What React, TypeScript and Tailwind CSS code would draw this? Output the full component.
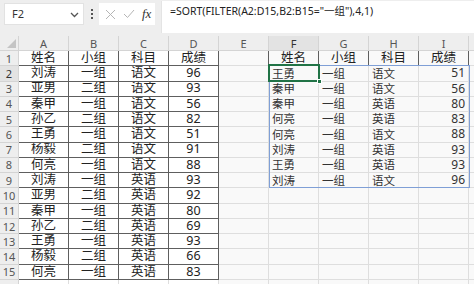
import React from "react";

const COLS = ["A", "B", "C", "D", "E", "F", "G", "H", "I"];

const left = [
  ["姓名", "小组", "科目", "成绩"],
  ["刘涛", "一组", "语文", "96"],
  ["亚男", "二组", "语文", "93"],
  ["秦甲", "一组", "语文", "56"],
  ["孙乙", "二组", "语文", "82"],
  ["王勇", "一组", "语文", "51"],
  ["杨毅", "二组", "语文", "91"],
  ["何亮", "一组", "语文", "88"],
  ["刘涛", "一组", "英语", "93"],
  ["亚男", "二组", "英语", "92"],
  ["秦甲", "一组", "英语", "80"],
  ["孙乙", "二组", "英语", "69"],
  ["王勇", "一组", "英语", "93"],
  ["杨毅", "二组", "英语", "66"],
  ["何亮", "一组", "英语", "83"],
];

const spill = [
  ["王勇", "一组", "语文", "51"],
  ["秦甲", "一组", "语文", "56"],
  ["秦甲", "一组", "英语", "80"],
  ["何亮", "一组", "英语", "83"],
  ["何亮", "一组", "语文", "88"],
  ["刘涛", "一组", "英语", "93"],
  ["王勇", "一组", "英语", "93"],
  ["刘涛", "一组", "语文", "96"],
];

// dark-bordered cells: A1:D15 and F1:I1 (row 1-based, col 0-based)
function isDark(r: number, c: number) {
  if (r >= 1 && r <= 15 && c >= 0 && c <= 3) return true;
  if (r === 1 && c >= 5 && c <= 8) return true;
  return false;
}

function cellText(r: number, c: number) {
  if (r >= 1 && r <= 15 && c <= 3) return left[r - 1][c];
  if (r === 1 && c >= 5 && c <= 8) return left[0][c - 5];
  if (r >= 2 && r <= 9 && c >= 5 && c <= 8) return spill[r - 2][c - 5];
  return "";
}

function Cell({ r, c }: { r: number; c: number }) {
  const dark = isDark(r, c);
  const rightDark = dark || isDark(r, c + 1);
  const bottomDark = dark || isDark(r + 1, c);
  const text = cellText(r, c);
  const inSpill = r >= 2 && r <= 9 && c >= 5;
  const num = c === 8 || c === 3;

  let align = "justify-center text-[12.5px] text-[#222]";
  if (inSpill) align = num ? "justify-end pr-[3px] text-[12px] text-[#333]" : "justify-start pl-[3px] text-[11.5px] text-[#333]";

  return (
    <div
      className={`flex items-center overflow-hidden whitespace-nowrap leading-none border-r border-b ${
        rightDark ? "border-r-[#5e5e5e]" : "border-r-[#dedede]"
      } ${bottomDark ? "border-b-[#5e5e5e]" : "border-b-[#dedede]"} ${
        r >= 1 && c <= 3 ? "bg-white" : "bg-[#f9f9f9]"
      } ${align}`}
    >
      {text}
    </div>
  );
}

export default function App() {
  const rows = Array.from({ length: 16 }, (_, i) => i + 1);
  return (
    <div
      className="w-[474px] h-[284px] overflow-hidden bg-[#f9f9f9] relative"
      style={{ fontFamily: '"Noto Sans", "Noto Sans CJK SC", sans-serif' }}
    >
      {/* formula bar */}
      <div className="h-[36px] bg-[#eeeeee] flex items-start">
        <div className="ml-[4px] mt-[3px] w-[80px] h-[22px] bg-white border border-[#e2e2e2] flex items-center justify-between pl-[7px] pr-[4px] text-[11px] text-[#333]">
          <span>F2</span>
          <svg width="9" height="6" viewBox="0 0 9 6" className="mt-[1px]">
            <path d="M1 1l3.5 3.5L8 1" stroke="#555" strokeWidth="1.3" fill="none" />
          </svg>
        </div>
        <div className="w-[15px] h-[28px] flex flex-col items-center justify-center gap-[2px]">
          <span className="w-[2px] h-[2px] bg-[#555]" />
          <span className="w-[2px] h-[2px] bg-[#555]" />
          <span className="w-[2px] h-[2px] bg-[#555]" />
        </div>
        <div className="mt-[3px] w-[56px] h-[22px] bg-white flex items-center pl-[6px] gap-[7px]">
          <svg width="11" height="11" viewBox="0 0 11 11">
            <path d="M1 1l9 9M10 1l-9 9" stroke="#b5b5b5" strokeWidth="1" />
          </svg>
          <svg width="12" height="10" viewBox="0 0 12 10">
            <path d="M1 5l3.5 3.5L11 1" stroke="#b5b5b5" strokeWidth="1" fill="none" />
          </svg>
          <span className="text-[13px] italic text-[#333]" style={{ fontFamily: '"Liberation Serif", serif' }}>
            fx
          </span>
        </div>
        <div className="ml-[6px] mt-[1px] flex-1 h-[32px] bg-white border-l border-[#e4e4e4] pl-[8px] pt-[3px] text-[10.5px] text-[#222]">
          =SORT(FILTER(A2:D15,B2:B15="一组"),4,1)
        </div>
      </div>

      {/* grid */}
      <div className="grid grid-cols-[19px_50px_50px_50px_50px_50px_50px_50px_50px_50px_50px] grid-rows-[15px_repeat(16,15.27px)] text-[#444] leading-none">
        <div className="bg-[#eeeeee] border-r border-b border-[#d4d4d4] relative">
          <div className="absolute right-[2px] bottom-[2px] w-0 h-0 border-l-[9px] border-l-transparent border-b-[9px] border-b-[#c4c4c4]" />
        </div>
        {COLS.concat([""]).map((c) => (
          <div
            key={c || "J"}
            className={`border-r border-b border-[#d4d4d4] flex items-center justify-center text-[11px] ${
              c === "F" ? "bg-[#e3e3e3] text-[#333]" : "bg-[#eeeeee] text-[#555]"
            }`}
          >
            {c}
          </div>
        ))}
        {rows.map((r) => (
          <React.Fragment key={r}>
            <div
              className={`border-r border-b border-[#d4d4d4] flex items-center justify-center text-[11px] ${
                r === 2 ? "bg-[#e3e3e3] text-[#333]" : "bg-[#eeeeee] text-[#555]"
              }`}
            >
              {r}
            </div>
            {Array.from({ length: 10 }, (_, c) => (
              <Cell key={c} r={r} c={c} />
            ))}
          </React.Fragment>
        ))}
      </div>

      {/* spill range border F2:I9 */}
      <div className="absolute left-[269px] top-[65.27px] w-[201px] h-[123.16px] border border-[#7f9fd6] pointer-events-none" />
      {/* active cell F2 */}
      <div className="absolute left-[268px] top-[64.27px] w-[52px] h-[17.27px] border-2 border-[#217346] pointer-events-none">
        <div className="absolute -right-[4px] -bottom-[4px] w-[5px] h-[5px] bg-[#217346] border border-white" />
      </div>
    </div>
  );
}
